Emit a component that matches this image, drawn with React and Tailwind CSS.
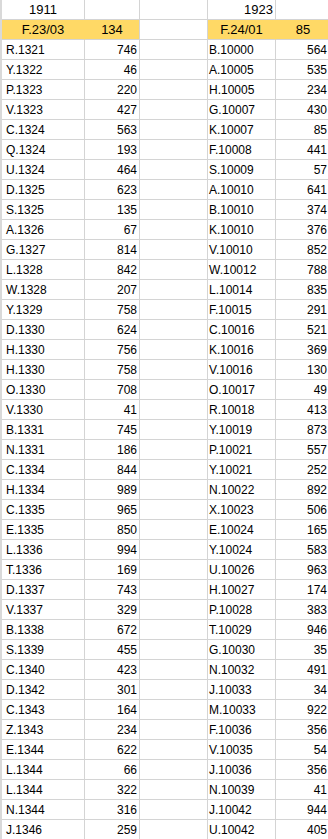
const left = [
  ['R.1321', 746], ['Y.1322', 46], ['P.1323', 220], ['V.1323', 427], ['C.1324', 563],
  ['Q.1324', 193], ['U.1324', 464], ['D.1325', 623], ['S.1325', 135], ['A.1326', 67],
  ['G.1327', 814], ['L.1328', 842], ['W.1328', 207], ['Y.1329', 758], ['D.1330', 624],
  ['H.1330', 756], ['H.1330', 758], ['O.1330', 708], ['V.1330', 41], ['B.1331', 745],
  ['N.1331', 186], ['C.1334', 844], ['H.1334', 989], ['C.1335', 965], ['E.1335', 850],
  ['L.1336', 994], ['T.1336', 169], ['D.1337', 743], ['V.1337', 329], ['B.1338', 672],
  ['S.1339', 455], ['C.1340', 423], ['D.1342', 301], ['C.1343', 164], ['Z.1343', 234],
  ['E.1344', 622], ['L.1344', 66], ['L.1344', 322], ['N.1344', 316], ['J.1346', 259],
];

const right = [
  ['B.10000', 564], ['A.10005', 535], ['H.10005', 234], ['G.10007', 430], ['K.10007', 85],
  ['F.10008', 441], ['S.10009', 57], ['A.10010', 641], ['B.10010', 374], ['K.10010', 376],
  ['V.10010', 852], ['W.10012', 788], ['L.10014', 835], ['F.10015', 291], ['C.10016', 521],
  ['K.10016', 369], ['V.10016', 130], ['O.10017', 49], ['R.10018', 413], ['Y.10019', 873],
  ['P.10021', 557], ['Y.10021', 252], ['N.10022', 892], ['X.10023', 506], ['E.10024', 165],
  ['Y.10024', 583], ['U.10026', 963], ['H.10027', 174], ['P.10028', 383], ['T.10029', 946],
  ['G.10030', 35], ['N.10032', 491], ['J.10033', 34], ['M.10033', 922], ['F.10036', 356],
  ['V.10035', 54], ['J.10036', 356], ['N.10039', 41], ['J.10042', 944], ['U.10042', 405],
];

const cell = 'h-5 border-b border-r border-[#d4d4d4] overflow-hidden whitespace-nowrap';
const data = 'text-[12px] leading-[17px] pt-[2px]';
const head = 'text-[13px] leading-[17px] pt-[1px]';

export default function App() {
  return (
    <div className="w-[328px] h-[839px] overflow-hidden bg-white text-black font-['Liberation_Sans',Arial,sans-serif]">
      <div className="w-[331px] border-l-2 border-[#d9d9d9] grid grid-cols-[83px_55px_68px_68px_55px]">
        {/* header rows */}
        <div className={`${cell} ${head} text-center`}>1911</div>
        <div className={cell} />
        <div className={cell} />
        <div className={`${cell} ${head} text-right pr-[2px]`}>1923</div>
        <div className={cell} />

        <div className={`${cell} ${head} text-center bg-[#ffd966] border-r-[#ffd966]`}>F.23/03</div>
        <div className={`${cell} ${head} text-center bg-[#ffd966]`}>134</div>
        <div className={cell} />
        <div className={`${cell} ${head} text-center bg-[#ffd966] border-r-[#ffd966]`}>F.24/01</div>
        <div className={`${cell} ${head} text-center bg-[#ffd966]`}>85</div>

        {left.map((row, i) => (
          <div key={i} className="contents">
            <div className={`${cell} ${data} pl-[4px]`}>{row[0]}</div>
            <div className={`${cell} ${data} text-right pr-[2px]`}>{row[1]}</div>
            <div className={cell} />
            <div className={`${cell} ${data} pl-[1px]`}>{right[i][0]}</div>
            <div className={`${cell} ${data} text-right pr-[3px]`}>{right[i][1]}</div>
          </div>
        ))}
      </div>
    </div>
  );
}
